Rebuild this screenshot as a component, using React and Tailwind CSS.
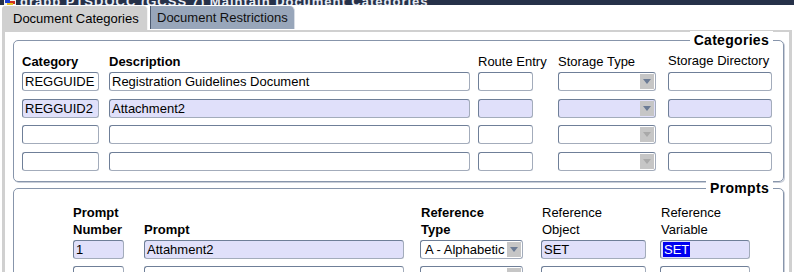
import React from 'react';

const inputBase =
    'h-[19px] shrink-0 rounded-[3px] border border-[#6f7f98] border-r-[#a3acbb] border-b-[#a3acbb] text-[13px] leading-[17px] pl-[2px] whitespace-nowrap overflow-hidden';

const Field = ({ w, ml, value, bg, children }) => (
    <div className={`${inputBase} ${w} ${ml} ${bg}`}>
        {children ?? value}
    </div>
);

const Select = ({ w, ml, value, bg, dark }) => (
    <div className={`${inputBase} ${w} ${ml} ${bg} flex items-stretch pl-0 pr-px`}>
        <span className="flex-1 pl-[2px]">{value}</span>
        <span className="w-[14px] my-px bg-[#c6c6c6] flex items-center justify-center">
            <svg width="8" height="5" viewBox="0 0 8 5">
                <polygon points="0,0 8,0 4,5" fill={dark ? '#6b7b95' : '#a9a9a9'} />
            </svg>
        </span>
    </div>
);

const Legend = ({ children }) => (
    <span className="absolute -top-[10px] right-[10px] px-[4px] bg-white text-[14px] leading-[18px] font-bold tracking-[0.3px]">
        {children}
    </span>
);

const catCols = [
    { w: 'w-[77px]', ml: 'ml-[8px]' },
    { w: 'w-[361px]', ml: 'ml-[10px]' },
    { w: 'w-[55px]', ml: 'ml-[8px]' },
    { w: 'w-[98px]', ml: 'ml-[25px]' },
    { w: 'w-[104px]', ml: 'ml-[12px]' },
];

const catRows = [
    { cat: 'REGGUIDE', desc: 'Registration Guidelines Document', bg: 'bg-white', dark: true, mt: 'mt-0' },
    { cat: 'REGGUID2', desc: 'Attachment2', bg: 'bg-[#e0e0fa]', dark: true, mt: 'mt-[8px]' },
    { cat: '', desc: '', bg: 'bg-white', dark: false, mt: 'mt-[7px]' },
    { cat: '', desc: '', bg: 'bg-white', dark: false, mt: 'mt-[8px]' },
];

const promptCols = [
    { w: 'w-[51px]', ml: 'ml-[59px]' },
    { w: 'w-[260px]', ml: 'ml-[20px]' },
    { w: 'w-[103px]', ml: 'ml-[16px]' },
    { w: 'w-[105px]', ml: 'ml-[18px]' },
    { w: 'w-[90px]', ml: 'ml-[14px]' },
];

const frameClass =
    'relative w-[771px] rounded-[5px] border border-[#8795ab] shadow-[1px_1px_0_#c9ced8]';

export default function App() {
    return (
        <div className="w-[794px] h-[272px] overflow-hidden bg-white text-black font-['Liberation_Sans',Arial,sans-serif]">
            {/* window title, mostly scrolled off */}
            <div className="h-[5px] bg-[#263149] overflow-hidden flex items-end gap-[4px] pl-[4px]">
                <svg width="12" height="5" viewBox="0 0 12 5" className="shrink-0">
                    <rect width="12" height="5" fill="#f2f2f2" />
                    <rect x="1" y="0" width="5" height="3" fill="#1c3fd0" />
                    <rect x="6" y="1" width="5" height="3" fill="#d03020" />
                    <rect x="3" y="3" width="6" height="2" fill="#e8c020" />
                </svg>
                <span className="text-[#e8ecf4] text-[13px] font-bold leading-[13px] -mb-[3px] whitespace-nowrap tracking-[1px]">
                    grapp PTSDOCC (GCSS 7) Maintain Document Categories
                </span>
            </div>

            {/* tabs */}
            <div className="h-[25px] flex items-end pl-[2px]">
                <div className="w-[146px] h-[24px] bg-[#d0d0d0] rounded-tl-[3px] rounded-tr-[4px] pl-[11px] pt-[5px] text-[13px] leading-[16px] border-r border-[#f4f4f4]">
                    Document Categories
                </div>
                <div className="ml-[2px] mb-[1px] w-[145px] h-[23px] bg-[#98a6ba] rounded-tr-[5px] border-l border-[#4c5a70] border-r border-r-[#d8dde5] pl-[6px] pt-[4px] text-[13px] leading-[16px] text-[#101010]">
                    Document Restrictions
                </div>
            </div>

            {/* tab page */}
            <div className="ml-[2px] w-[790px] h-[242px] border-l-[3px] border-r-[3px] border-t-2 border-[#d0d0d0] pl-[8px] pt-[8px]">
                {/* Categories */}
                <div className={`${frameClass} h-[142px]`}>
                    <Legend>Categories</Legend>
                    <div className="flex pt-[13px] h-[31px] text-[13px] leading-[16px]">
                        <span className={`${catCols[0].w} ${catCols[0].ml} shrink-0 font-bold`}>Category</span>
                        <span className={`${catCols[1].w} ${catCols[1].ml} shrink-0 font-bold`}>Description</span>
                        <span className={`${catCols[2].w} ${catCols[2].ml} shrink-0 whitespace-nowrap`}>Route Entry</span>
                        <span className={`${catCols[3].w} ${catCols[3].ml} shrink-0 whitespace-nowrap`}>Storage Type</span>
                        <span className={`${catCols[4].w} ${catCols[4].ml} shrink-0 whitespace-nowrap -mt-px`}>Storage Directory</span>
                    </div>
                    {catRows.map((r, i) => (
                        <div key={i} className={`flex ${r.mt}`}>
                            <Field {...catCols[0]} bg={r.bg} value={r.cat} />
                            <Field {...catCols[1]} bg={r.bg} value={r.desc} />
                            <Field {...catCols[2]} bg={r.bg} value="" />
                            <Select {...catCols[3]} bg={r.bg} value="" dark={r.dark} />
                            <Field {...catCols[4]} bg={r.bg} value="" />
                        </div>
                    ))}
                </div>

                {/* Prompts */}
                <div className={`${frameClass} mt-[6px] h-[120px]`}>
                    <Legend>Prompts</Legend>
                    <div className="flex pt-[15px] h-[51px] text-[13px] leading-[17px]">
                        <span className={`${promptCols[0].w} ${promptCols[0].ml} shrink-0 font-bold`}>Prompt<br />Number</span>
                        <span className={`${promptCols[1].w} ${promptCols[1].ml} shrink-0 font-bold`}><br />Prompt</span>
                        <span className={`${promptCols[2].w} ${promptCols[2].ml} shrink-0 font-bold pl-px`}>Reference<br />Type</span>
                        <span className={`${promptCols[3].w} ${promptCols[3].ml} shrink-0 pl-px`}>Reference<br />Object</span>
                        <span className={`${promptCols[4].w} ${promptCols[4].ml} shrink-0 pl-px`}>Reference<br />Variable</span>
                    </div>
                    <div className="flex">
                        <Field {...promptCols[0]} bg="bg-[#e0e0fa]" value="1" />
                        <Field {...promptCols[1]} bg="bg-[#e0e0fa]" value="Attahment2" />
                        <Select {...promptCols[2]} bg="bg-white" value="A - Alphabetic" dark />
                        <Field {...promptCols[3]} bg="bg-[#e0e0fa]" value="SET" />
                        <Field {...promptCols[4]} bg="bg-[#e0e0fa]">
                            <span className="bg-[#0000f0] text-white px-px">SET</span>
                        </Field>
                    </div>
                    <div className="flex mt-[7px]">
                        <Field {...promptCols[0]} bg="bg-white" value="" />
                        <Field {...promptCols[1]} bg="bg-white" value="" />
                        <Select {...promptCols[2]} bg="bg-white" value="" />
                        <Field {...promptCols[3]} bg="bg-white" value="" />
                        <Field {...promptCols[4]} bg="bg-white" value="" />
                    </div>
                </div>
            </div>
        </div>
    );
}
